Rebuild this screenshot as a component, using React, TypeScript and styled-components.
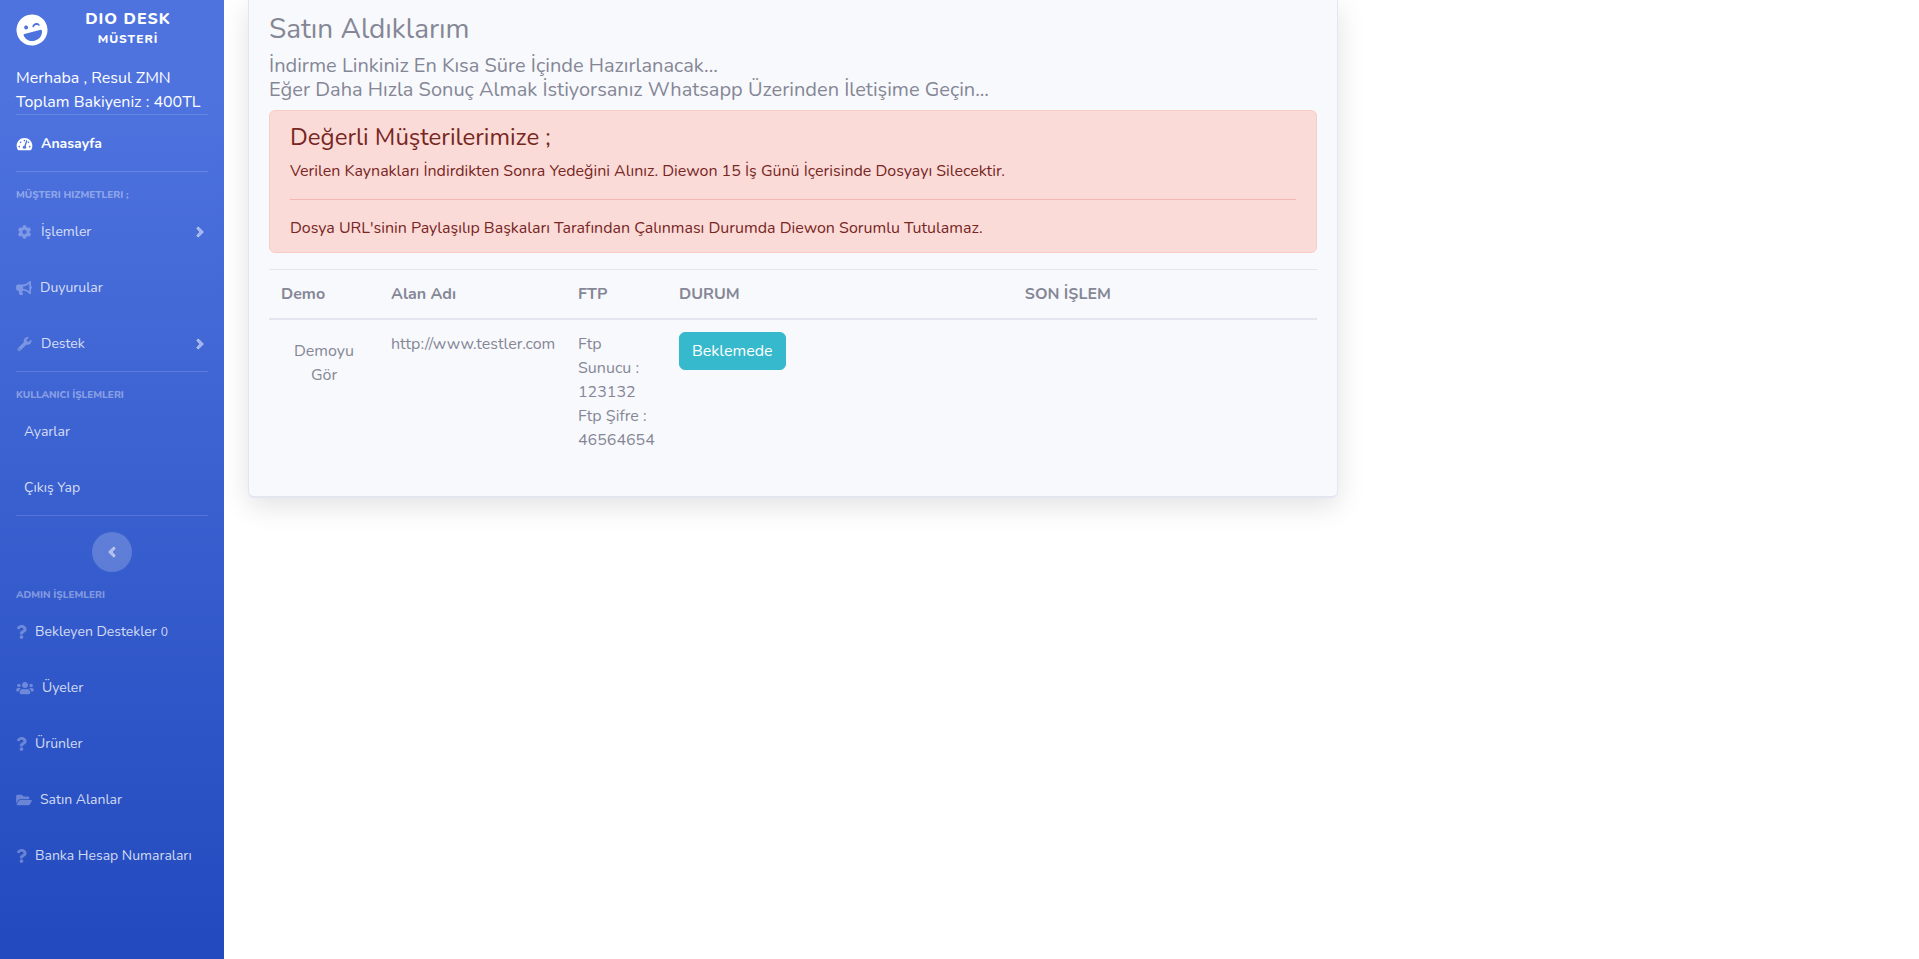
import React from 'react';
import styled, { createGlobalStyle, css } from 'styled-components';
import {
  FaAngleLeft,
  FaAngleRight,
  FaBullhorn,
  FaCog,
  FaFolderOpen,
  FaLaughWink,
  FaQuestion,
  FaTachometerAlt,
  FaUsers,
  FaWrench,
} from 'react-icons/fa';

const GlobalStyle = createGlobalStyle`
  *, *::before, *::after { box-sizing: border-box; }
  body {
    margin: 0;
    background: #fff;
    color: #858796;
    font: 400 16px/24px Nunito, Roboto, "Noto Sans", sans-serif;
  }
  h1, h2, h3, p, ul { margin: 0; padding: 0; }
`;

const Page = styled.div`
  display: flex;
  min-height: 100vh;
`;

const Sidebar = styled.nav`
  flex: 0 0 224px;
  background: linear-gradient(180deg, #4e73df 10%, #224abe 100%);
  color: #fff;
`;

const Brand = styled.a`
  display: flex;
  align-items: center;
  height: 60px;
  margin-bottom: 6px;
  padding: 0 16px;
  color: #fff;
  text-decoration: none;
  text-transform: uppercase;
  text-align: center;
  font-weight: 800;
  letter-spacing: 1px;
  line-height: 24px;

  svg {
    width: 32px;
    height: 32px;
    transform: rotate(-15deg);
  }
`;

const BrandName = styled.span`
  flex: 1;
  margin: 0 16px;
  padding-bottom: 6px;
`;

const BrandRole = styled.small`
  display: block;
  font-size: 12px;
  line-height: 16px;
`;

const Account = styled.div`
  padding: 0 16px;
  white-space: nowrap;
`;

const Divider = styled.hr<{ $spaced?: boolean }>`
  height: 1px;
  margin: 0 16px ${(p) => (p.$spaced ? '16px' : '0')};
  border: 0;
  background: rgba(255, 255, 255, 0.15);
`;

const SectionTitle = styled.h2`
  padding: 0 16px;
  color: rgba(255, 255, 255, 0.4);
  font-size: 10px;
  font-weight: 800;
  line-height: 15px;
`;

const NavList = styled.ul`
  list-style: none;
`;

const navEntry = css<{ $active?: boolean }>`
  display: flex;
  align-items: center;
  gap: 8px;
  width: 100%;
  height: 56px;
  padding: 1px 16px 0;
  border: 0;
  background: none;
  color: ${(p) => (p.$active ? '#fff' : 'rgba(255, 255, 255, 0.8)')};
  font: inherit;
  font-size: 14px;
  font-weight: ${(p) => (p.$active ? 700 : 400)};
  text-align: left;
  text-decoration: none;
  white-space: nowrap;
  cursor: pointer;
`;

const NavLink = styled.a<{ $active?: boolean }>`
  ${navEntry}
`;

const NavButton = styled.button<{ $active?: boolean }>`
  ${navEntry}
`;

const NavIcon = styled.span<{ $width: number; $active?: boolean }>`
  flex: 0 0 ${(p) => p.$width}px;
  display: flex;
  color: ${(p) => (p.$active ? '#fff' : 'rgba(255, 255, 255, 0.3)')};

  svg {
    width: 100%;
    height: 14px;
  }
`;

const NavArrow = styled.span`
  display: flex;
  margin-left: auto;
  padding-right: 4px;
  color: rgba(255, 255, 255, 0.5);

  svg {
    width: 8px;
    height: 16px;
    stroke: currentColor;
    stroke-width: 24px;
  }
`;

const Count = styled.span`
  margin-left: -4px;
  font-size: 12px;
`;

const CollapseButton = styled.button`
  display: flex;
  align-items: center;
  justify-content: center;
  width: 40px;
  height: 40px;
  margin: 0 auto 16px;
  padding: 0;
  border: 0;
  border-radius: 50%;
  background: rgba(255, 255, 255, 0.2);
  color: rgba(255, 255, 255, 0.5);
  cursor: pointer;

  svg {
    width: 8px;
    height: 16px;
    stroke: currentColor;
    stroke-width: 24px;
  }
`;

const Content = styled.main`
  flex: 1;
  min-width: 0;
  padding: 0 12px;
`;

const Column = styled.div`
  width: calc(100% * 2 / 3);
  padding: 0 12px;
`;

const Card = styled.section`
  padding: 12px 20px 20px;
  border: 1px solid #e3e6f0;
  border-width: 0 1px 2px;
  border-radius: 0 0 6px 6px;
  background: #f8f9fc;
  box-shadow: 0 8px 28px rgba(0, 0, 0, 0.12);
`;

const CardTitle = styled.h1`
  margin-bottom: 8px;
  font-size: 28px;
  font-weight: 400;
  line-height: 34px;
`;

const Lead = styled.p`
  margin-bottom: 8px;
  font-size: 20px;
`;

const Alert = styled.div`
  margin-bottom: 16px;
  padding: 12px 20px;
  border: 1px solid #f8ccc8;
  border-radius: 6px;
  background: #fadbd8;
  color: #78261f;
`;

const AlertTitle = styled.h2`
  margin-bottom: 8px;
  font-size: 24px;
  font-weight: 400;
  line-height: 28px;
`;

const AlertRule = styled.hr`
  height: 1px;
  margin: 16px 0;
  border: 0;
  background: #f5b7b1;
`;

const Table = styled.table`
  width: 100%;
  border-collapse: collapse;
  table-layout: fixed;
`;

const HeadCell = styled.th<{ $width?: string }>`
  width: ${(p) => p.$width ?? 'auto'};
  padding: 12px;
  border-top: 1px solid #e3e6f0;
  border-bottom: 2px solid #e3e6f0;
  text-align: left;
  font-weight: 700;
`;

const Cell = styled.td`
  padding: 12px 12px 24px;
  vertical-align: top;
`;

const DemoLink = styled.a`
  display: block;
  padding: 7px 12px;
  color: inherit;
  text-align: center;
  text-decoration: none;
`;

const StatusButton = styled.button`
  padding: 6px 12px;
  border: 1px solid #36b9cc;
  border-radius: 6px;
  background: #36b9cc;
  color: #fff;
  font: inherit;
  cursor: pointer;
`;

type Entry = {
  label: string;
  icon?: React.ReactNode;
  iconWidth?: number;
  active?: boolean;
  expandable?: boolean;
  count?: number;
};

const home: Entry[] = [
  { label: 'Anasayfa', icon: <FaTachometerAlt viewBox="0 0 576 512" />, iconWidth: 17, active: true },
];

const services: Entry[] = [
  { label: 'İşlemler', icon: <FaCog />, iconWidth: 17, expandable: true },
  { label: 'Duyurular', icon: <FaBullhorn />, iconWidth: 16 },
  { label: 'Destek', icon: <FaWrench />, iconWidth: 17, expandable: true },
];

const userEntries: Entry[] = [{ label: 'Ayarlar' }, { label: 'Çıkış Yap' }];

const adminEntries: Entry[] = [
  { label: 'Bekleyen Destekler', icon: <FaQuestion />, iconWidth: 11, count: 0 },
  { label: 'Üyeler', icon: <FaUsers />, iconWidth: 18 },
  { label: 'Ürünler', icon: <FaQuestion />, iconWidth: 11 },
  { label: 'Satın Alanlar', icon: <FaFolderOpen />, iconWidth: 16 },
  { label: 'Banka Hesap Numaraları', icon: <FaQuestion />, iconWidth: 11 },
];

function NavEntries({ entries }: { entries: Entry[] }) {
  return (
    <NavList>
      {entries.map(({ label, icon, iconWidth = 0, active, expandable, count }) => {
        const body = (
          <>
            <NavIcon $width={iconWidth} $active={active}>{icon}</NavIcon>
            <span>{label}</span>
            {count !== undefined && <Count>{count}</Count>}
            {expandable && <NavArrow><FaAngleRight /></NavArrow>}
          </>
        );
        return (
          <li key={label}>
            {expandable ? (
              <NavButton type="button" aria-expanded={false}>{body}</NavButton>
            ) : (
              <NavLink href="#" $active={active}>{body}</NavLink>
            )}
          </li>
        );
      })}
    </NavList>
  );
}

export default function App() {
  return (
    <>
      <GlobalStyle />
      <Page>
        <Sidebar>
          <Brand href="#">
            <FaLaughWink />
            <BrandName>
              Dio Desk <BrandRole>MÜSTERİ</BrandRole>
            </BrandName>
          </Brand>
          <Account>
            <p>Merhaba , Resul ZMN</p>
            <p>Toplam Bakiyeniz : 400TL</p>
          </Account>
          <Divider />
          <NavEntries entries={home} />
          <Divider $spaced />
          <SectionTitle>MÜŞTERI HIZMETLERI ;</SectionTitle>
          <NavEntries entries={services} />
          <Divider $spaced />
          <SectionTitle>KULLANICI İŞLEMLERI</SectionTitle>
          <NavEntries entries={userEntries} />
          <Divider $spaced />
          <CollapseButton type="button" aria-label="Menüyü daralt">
            <FaAngleLeft />
          </CollapseButton>
          <SectionTitle>ADMIN İŞLEMLERI</SectionTitle>
          <NavEntries entries={adminEntries} />
        </Sidebar>
        <Content>
          <Column>
            <Card>
              <CardTitle>Satın Aldıklarım</CardTitle>
              <Lead>
                İndirme Linkiniz En Kısa Süre İçinde Hazırlanacak...
                <br />
                Eğer Daha Hızla Sonuç Almak İstiyorsanız Whatsapp Üzerinden İletişime Geçin...
              </Lead>
              <Alert role="alert">
                <AlertTitle>Değerli Müşterilerimize ;</AlertTitle>
                <p>
                  Verilen Kaynakları İndirdikten Sonra Yedeğini Alınız. Diewon 15 İş Günü İçerisinde Dosyayı
                  Silecektir.
                </p>
                <AlertRule />
                <p>Dosya URL'sinin Paylaşılıp Başkaları Tarafından Çalınması Durumda Diewon Sorumlu Tutulamaz.</p>
              </Alert>
              <Table>
                <thead>
                  <tr>
                    <HeadCell $width="110px">Demo</HeadCell>
                    <HeadCell $width="187px">Alan Adı</HeadCell>
                    <HeadCell $width="101px">FTP</HeadCell>
                    <HeadCell $width="33%">DURUM</HeadCell>
                    <HeadCell>SON İŞLEM</HeadCell>
                  </tr>
                </thead>
                <tbody>
                  <tr>
                    <Cell><DemoLink href="#">Demoyu Gör</DemoLink></Cell>
                    <Cell>http://www.testler.com</Cell>
                    <Cell>
                      Ftp Sunucu : 123132
                      <br />
                      Ftp Şifre : 46564654
                    </Cell>
                    <Cell><StatusButton type="button">Beklemede</StatusButton></Cell>
                    <Cell />
                  </tr>
                </tbody>
              </Table>
            </Card>
          </Column>
        </Content>
      </Page>
    </>
  );
}
